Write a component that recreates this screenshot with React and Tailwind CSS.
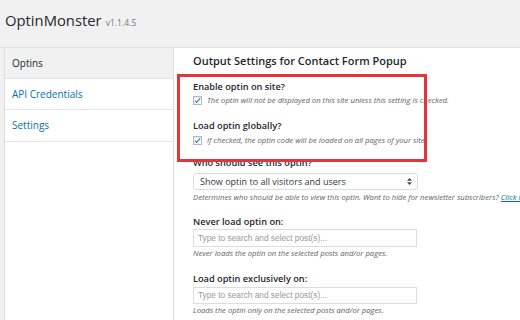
import React from "react";

function Check() {
  return (
    <span className="flex h-[9px] w-[9px] shrink-0 items-center justify-center border border-[#b4b9be] bg-white shadow-[inset_0_1px_1px_rgba(0,0,0,0.1)]">
      <svg width="8" height="7" viewBox="0 0 8 7">
        <path d="M1 3.6 L3 5.6 L7 1" fill="none" stroke="#1e8cbe" strokeWidth="1.4" />
      </svg>
    </span>
  );
}

function Label({ children, className = "" }) {
  return (
    <div className={"h-[12px] text-[9.2px] leading-[12px] font-semibold text-[#23282d] whitespace-nowrap " + className}>
      {children}
    </div>
  );
}

function Desc({ children, className = "" }) {
  return (
    <div className={"h-[11px] text-[7.7px] leading-[11px] italic text-[#5f5f5f] whitespace-nowrap " + className}>
      {children}
    </div>
  );
}

function TextInput({ className = "", h = "h-[18px]" }) {
  return (
    <div className={"flex w-[224px] items-center border border-[#dddddd] bg-white pl-[4px] " + h + " " + className}>
      <span className="font-['Liberation_Sans',Arial,sans-serif] text-[8.3px] text-[#9a9a9a]">
        Type to search and select post(s)...
      </span>
    </div>
  );
}

export default function App() {
  return (
    <div className="relative flex h-[320px] w-[520px] flex-col overflow-hidden bg-[#f1f1f1] font-['Open_Sans',sans-serif]">
      <div className="flex h-[20px] items-baseline pl-[5px] pt-0 mt-[10px] leading-[20px]">
        <span className="text-[14.8px] text-[#23282d]">OptinMonster</span>
        <span className="ml-[4px] text-[8.6px] text-[#777]">v1.1.4.5</span>
      </div>
      <div className="mt-[17px] flex flex-1 border-t border-[#e1e1e1]">
        <div className="ml-[4px] flex w-[170px] shrink-0 flex-col border-l border-r border-[#dcdcdc] bg-white">
          <div className="flex h-[31px] items-center border-b border-[#e5e5e5] bg-[#f1f1f1] pl-[7px] text-[10px] text-[#23282d]">
            Optins
          </div>
          <div className="flex h-[31px] items-center border-b border-[#e5e5e5] pl-[7px] text-[10px] text-[#0073aa]">
            API Credentials
          </div>
          <div className="flex h-[32px] items-center border-b border-[#e5e5e5] pl-[7px] text-[10px] text-[#0073aa]">
            Settings
          </div>
        </div>
        <div className="flex min-w-0 flex-1 flex-col overflow-hidden bg-white pl-[19px]">
          <div className="mt-[6px] h-[14px] text-[11px] leading-[14px] font-semibold text-[#23282d] whitespace-nowrap">
            Output Settings for Contact Form Popup
          </div>
          <Label className="mt-[13px]">Enable optin on site?</Label>
          <div className="mt-[2px] flex h-[11px] items-center gap-[5px]">
            <Check />
            <Desc>The optin will not be displayed on this site unless this setting is checked.</Desc>
          </div>
          <Label className="mt-[14px]">Load optin globally?</Label>
          <div className="mt-[3px] flex h-[11px] items-center gap-[5px]">
            <Check />
            <Desc>If checked, the optin code will be loaded on all pages of your site.</Desc>
          </div>
          <Label className="mt-[11px]">Who should see this optin?</Label>
          <div className="mt-[4px] flex h-[17px] w-[225px] items-center justify-between rounded-[3px] border border-[#dddddd] bg-white pl-[6px] pr-[5px]">
            <span className="text-[9px] text-[#32373c]">Show optin to all visitors and users</span>
            <svg width="5" height="7" viewBox="0 0 5 7">
              <path d="M2.5 0 L5 2.8 L0 2.8 Z M2.5 7 L5 4.2 L0 4.2 Z" fill="#444" />
            </svg>
          </div>
          <Desc className="mt-[2px]">
            Determines who should be able to view this optin. Want to hide for newsletter subscribers?{" "}
            <span className="text-[#0073aa] underline">Click here</span>
          </Desc>
          <Label className="mt-[13px]">Never load optin on:</Label>
          <TextInput className="mt-[1px]" />
          <Desc className="mt-[1px]">Never loads the optin on the selected posts and/or pages.</Desc>
          <Label className="mt-[14px]">Load optin exclusively on:</Label>
          <TextInput className="mt-[2px]" h="h-[17px]" />
          <Desc className="mt-[1px]">Loads the optin only on the selected posts and/or pages.</Desc>
        </div>
      </div>
      <div className="absolute left-[177px] top-[74px] h-[88px] w-[250px] border-[3px] border-[#e2363b]" />
    </div>
  );
}
